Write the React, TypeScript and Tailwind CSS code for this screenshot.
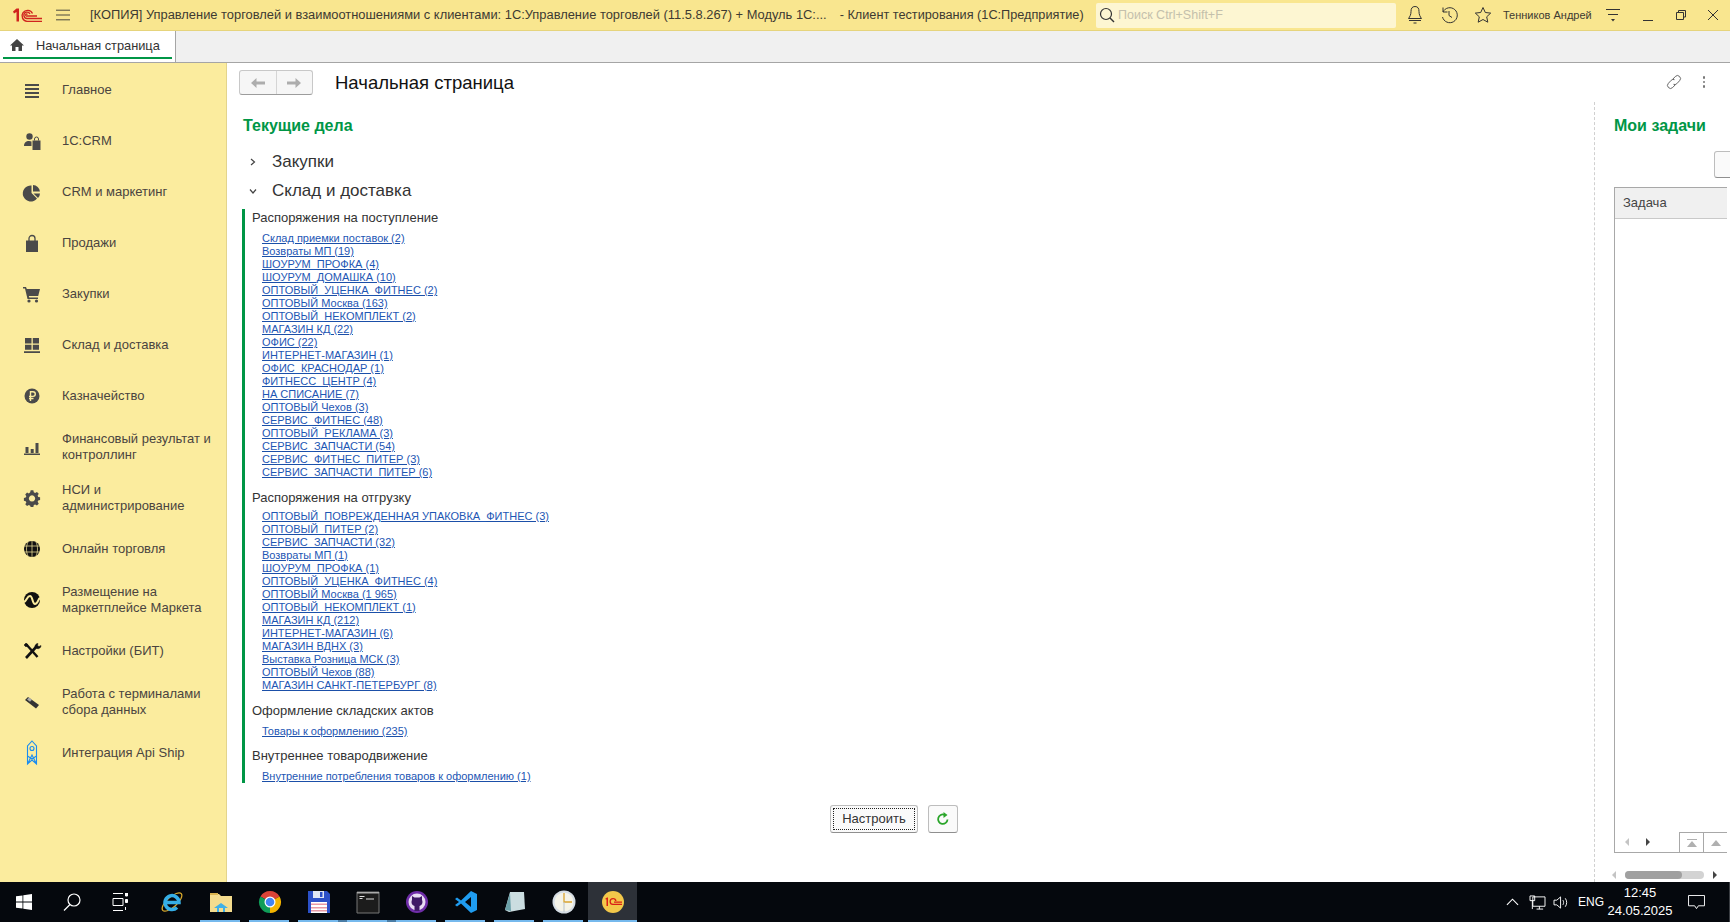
import type { ReactNode } from 'react';

const G = '#4a4a4a';

const sideItems: { label: ReactNode; icon: ReactNode }[] = [
  { label: 'Главное', icon: <path d="M2 3h14v2H2zM2 7h14v2H2zM2 11h14v2H2zM2 15h14v2H2z" fill={G} /> },
  { label: '1С:CRM', icon: <g fill={G}><circle cx="6.5" cy="4.5" r="3.2" /><path d="M1 14c0-3.5 2-5 5-5 1 0 2 .2 2.5.6V14z" /><path d="M9.5 8.5h8V18h-8z" /><path d="M11.5 8.5V7a2 2 0 0 1 4 0v1.5" fill="none" stroke={G} /></g> },
  { label: 'CRM и маркетинг', icon: <g fill={G}><path d="M8.5 2.5v7.5l5.5 5.5A8 8 0 1 1 8.500 2.500z" /><path d="M10 2a7 7 0 0 1 6.900 6.500H10z" /><path d="M10.500 10.500h6.500a7 7 0 0 1-2 4.500z" /></g> },
  { label: 'Продажи', icon: <g fill={G}><path d="M3 6.500h12V18H3z" /><path d="M6 9V4.500a3 3 0 0 1 6 0V9" fill="none" stroke={G} strokeWidth="1.300" /></g> },
  { label: 'Закупки', icon: <g fill={G}><path d="M0 2h3l.8 2H17l-1.800 7H5.800L6.300 12.500H15V14H4.500L2 3.500H0z" /><circle cx="6" cy="16" r="1.600" /><circle cx="13.500" cy="16" r="1.600" /></g> },
  { label: 'Склад и доставка', icon: <path d="M2 2h6.500v5.500H2zM9.800 2H16v5.500H9.800zM2 8.800h6.500v5H2zM9.800 8.800H16v5H9.800zM1 15.200h16V17H1z" fill={G} /> },
  { label: 'Казначейство', icon: <g><circle cx="9" cy="9" r="7.500" fill={G} /><path d="M7.500 14V4.800h2.500a2.300 2.300 0 0 1 0 4.600H6M6 11.500h4.500" stroke="#fbec9e" strokeWidth="1.400" fill="none" /></g> },
  { label: <>Финансовый результат и<br />контроллинг</>, icon: <path d="M2.500 9h3v6h-3zM7.700 11h3v4h-3zM12.500 5h3v10h-3zM1 15.500h16V17H1z" fill={G} /> },
  { label: <>НСИ и<br />администрирование</>, icon: <path fillRule="evenodd" d="M7.500 1.500h3l.5 2.200 1.500.7 2-1.200 2 2.100-1.200 2 .6 1.500 2.100.5v3l-2.100.5-.6 1.500 1.200 2-2 2-2-1.200-1.500.7-.5 2.100h-3L7 18.500l-1.500-.7-2 1.200-2-2 1.200-2-.7-1.500L0 13V10l2-.5.7-1.500-1.200-2 2-2.100 2 1.200L7 3.700z M9 7a3.500 3.500 0 1 0 .01 0z" fill={G} transform="scale(.9) translate(1 0)" /> },
  { label: 'Онлайн торговля', icon: <g><circle cx="9" cy="9" r="8" fill="#111" /><path d="M1 6h16M1 12h16M9 1v16M5 2c-2 4-2 10 0 14M13 2c2 4 2 10 0 14" stroke="#fbec9e" strokeWidth=".7" fill="none" /></g> },
  { label: <>Размещение на<br />маркетплейсе Маркета</>, icon: <g><circle cx="9" cy="9" r="8" fill="#111" /><path d="M1 11c3-1 3-6 6-6s2 8 5 8 3-5 5-6" stroke="#fbec9e" strokeWidth="2" fill="none" /></g> },
  { label: 'Настройки (БИТ)', icon: <g stroke="#111" fill="none"><path d="M3 16 14 4" strokeWidth="2.600" /><path d="M15 1.500a3.200 3.200 0 0 0-3 4l2 1a3 3 0 0 0 4-3l-2 1-1.500-1z" fill="#111" strokeWidth=".5" /><path d="M3 2l11.500 13" strokeWidth="2.400" /><path d="M1 3l2-2 2 2-2 2z" fill="#111" strokeWidth=".5" /></g> },
  { label: <>Работа с терминалами<br />сбора данных</>, icon: <g><path d="M2 7l3-3 11 8-3 3.500z" fill="#333" /><path d="M4 6.500l2-2 3 2.200-2 2z" fill="#a9a9a9" /></g> },
  { label: 'Интеграция Api Ship', icon: <g fill="none" stroke="#1a8cf0" strokeWidth="1.100"><path d="M9 -3 13.500 2v10l-4.500 3-4.500-3V2z" /><circle cx="9" cy="4.500" r="2" /><path d="M4.500 12v8l4.500-4 4.500 4v-8M4.500 20 9 11l4.500 9" /></g> },
];

const incoming = ['Склад приемки поставок (2)', 'Возвраты МП (19)', 'ШОУРУМ_ПРОФКА (4)', 'ШОУРУМ_ДОМАШКА (10)', 'ОПТОВЫЙ_УЦЕНКА_ФИТНЕС (2)', 'ОПТОВЫЙ Москва (163)', 'ОПТОВЫЙ_НЕКОМПЛЕКТ (2)', 'МАГАЗИН КД (22)', 'ОФИС (22)', 'ИНТЕРНЕТ-МАГАЗИН (1)', 'ОФИС_КРАСНОДАР (1)', 'ФИТНЕСС_ЦЕНТР (4)', 'НА СПИСАНИЕ (7)', 'ОПТОВЫЙ Чехов (3)', 'СЕРВИС_ФИТНЕС (48)', 'ОПТОВЫЙ_РЕКЛАМА (3)', 'СЕРВИС_ЗАПЧАСТИ (54)', 'СЕРВИС_ФИТНЕС_ПИТЕР (3)', 'СЕРВИС_ЗАПЧАСТИ_ПИТЕР (6)'];
const outgoing = ['ОПТОВЫЙ_ПОВРЕЖДЕННАЯ УПАКОВКА_ФИТНЕС (3)', 'ОПТОВЫЙ_ПИТЕР (2)', 'СЕРВИС_ЗАПЧАСТИ (32)', 'Возвраты МП (1)', 'ШОУРУМ_ПРОФКА (1)', 'ОПТОВЫЙ_УЦЕНКА_ФИТНЕС (4)', 'ОПТОВЫЙ Москва (1 965)', 'ОПТОВЫЙ_НЕКОМПЛЕКТ (1)', 'МАГАЗИН КД (212)', 'ИНТЕРНЕТ-МАГАЗИН (6)', 'МАГАЗИН ВДНХ (3)', 'Выставка Розница МСК (3)', 'ОПТОВЫЙ Чехов (88)', 'МАГАЗИН САНКТ-ПЕТЕРБУРГ (8)'];

const Group = ({ title, links, tight, className }: { title: string; links: string[]; tight?: boolean; className: string }) => (
  <div className={`pl-[7px] ${className}`}>
    <div className={`text-[13px] leading-[16px] text-[#333] ${tight ? 'mb-[4px]' : 'mb-[6px]'}`}>{title}</div>
    <div className="pl-[10px] flex flex-col items-start">
      {links.map((l) => (
        <a key={l} className="text-[11px] leading-[13px] h-[13px] text-[#1d56b4] underline decoration-[#1b4fa8] underline-offset-1 whitespace-nowrap">{l}</a>
      ))}
    </div>
  </div>
);

const Sidebar = () => (
  <aside className="w-[227px] shrink-0 bg-[#fbec9e] border-r border-[#e3d48c] pt-[1px]">
    {sideItems.map((it, i) => (
      <div key={i} className="h-[51px] flex items-center">
        <svg viewBox="0 0 18 18" className="w-[18px] h-[18px] ml-[23px] mr-[21px] shrink-0 overflow-visible">{it.icon}</svg>
        <span className="text-[13px] leading-[16px] text-[#4a4440]">{it.label}</span>
      </div>
    ))}
  </aside>
);

const TitleBar = () => (
  <header className="h-[31px] bg-[#f9e68f] border-b border-[#e6d47c] flex items-center">
    <svg viewBox="0 0 29 14" className="w-[29px] h-[14px] ml-[13px] shrink-0">
      <path d="M0 3.500 3.500.5H6v13H3.500V4L1 5.500z" fill="#d0241e" />
      <g stroke="#d0241e" strokeWidth="1.300" fill="none">
        <path d="M19.500 5.500A5.500 5.500 0 1 0 14 13.300H29" />
        <path d="M17 6A3.200 3.200 0 1 0 14 10.500H29" />
        <path d="M14.500 6.500A1 1 0 1 0 14 8H24" />
      </g>
    </svg>
    <svg viewBox="0 0 16 12" className="w-[14px] h-[12px] ml-[14px] shrink-0"><path d="M0 .5h16M0 6h16M0 11.500h16" stroke="#333" /></svg>
    <span className="ml-[20px] text-[12.880px] text-[#3d3a32] whitespace-nowrap w-[997px] shrink-0">[КОПИЯ] Управление торговлей и взаимоотношениями с клиентами: 1С:Управление торговлей (11.5.8.267) + Модуль 1С:...<span className="ml-[13px] text-[12.710px]">- Клиент тестирования (1С:Предприятие)</span></span>
    <div className="ml-[9px] w-[300px] h-[25px] bg-[#fdf6d2] rounded-[2px] flex items-center shrink-0">
      <svg viewBox="0 0 16 16" className="w-[16px] h-[16px] ml-[3px]"><circle cx="7" cy="7" r="5.500" stroke="#333" strokeWidth="1.200" fill="none" /><path d="M11 11l4 4" stroke="#333" strokeWidth="1.500" /></svg>
      <span className="ml-[3px] text-[12.500px] text-[#c4c0ac]">Поиск Ctrl+Shift+F</span>
    </div>
    <svg viewBox="0 0 18 20" className="w-[18px] h-[20px] ml-[10px]"><path d="M9 1.500c-3 0-4 2-4 5 0 3-1 5-2.500 7h13c-1.500-2-2.500-4-2.500-7 0-3-1-5-4-5zM3 15.500h12M7.500 18h3" stroke="#333" fill="none" /></svg>
    <svg viewBox="0 0 18 18" className="w-[18px] h-[18px] ml-[16px]"><path d="M3 6a7.500 7.500 0 1 1-.5 5M3 1.500V6h4.500M9 5v4.500l3 2" stroke="#333" fill="none" /></svg>
    <svg viewBox="0 0 18 18" className="w-[18px] h-[18px] ml-[16px]"><path d="M9 1.500l2.300 5 5.400.6-4 3.700 1.100 5.400L9 13.500l-4.800 2.700 1.100-5.400-4-3.700 5.400-.6z" stroke="#333" fill="none" /></svg>
    <span className="ml-[11px] text-[11px] text-[#3d3a32] whitespace-nowrap">Тенников Андрей</span>
    <svg viewBox="0 0 16 16" className="w-[16px] h-[16px] ml-[13px]"><path d="M1 2.500h14M3 7.500h10" stroke="#333" /><path d="M6 12h4l-2 2.500z" fill="#333" /></svg>
    <span className="ml-[22px] w-[10px] h-px bg-[#333] mt-[10px]" />
    <svg viewBox="0 0 10 10" className="w-[10px] h-[10px] ml-[23px]"><path d="M2.500 2.500V.5h7v6.500h-2M.5 2.500h7v7h-7z" stroke="#333" fill="none" /></svg>
    <svg viewBox="0 0 10 10" className="w-[10px] h-[10px] ml-[22px]"><path d="M0 0l10 10M10 0 0 10" stroke="#333" /></svg>
  </header>
);

const TabBar = () => (
  <div className="h-[32px] bg-[#f0f0f0] border-b border-[#a5a5a5] flex">
    <div className="w-[176px] bg-white border-r border-[#a5a5a5] px-[3px] pt-[7px]">
      <div className="h-[21px] border-b-2 border-[#009646] flex items-start pl-[7px]">
        <svg viewBox="0 0 14 12" className="w-[14px] h-[12px] mt-[1px]"><path d="M7 0 14 6.500h-2V12H8.500V8h-3v4H2V6.500H0z" fill="#444" /></svg>
        <span className="ml-[12px] text-[12.800px] leading-[16px] text-[#333] whitespace-nowrap">Начальная страница</span>
      </div>
    </div>
  </div>
);

const NavButtons = () => (
  <div className="w-[74px] h-[25px] border border-[#c8c8c8] border-b-[#9c9c9c] rounded-[3px] bg-[#f6f6f6] flex shrink-0">
    <div className="flex-1 flex items-center justify-center border-r border-[#d5d5d5]">
      <svg viewBox="0 0 14 10" className="w-[14px] h-[10px]"><path d="M5.500 0 0 5l5.500 5V6.500H14v-3H5.500z" fill="#adadad" /></svg>
    </div>
    <div className="flex-1 flex items-center justify-center">
      <svg viewBox="0 0 14 10" className="w-[14px] h-[10px]"><path d="M8.500 0 14 5l-5.500 5V6.500H0v-3h8.500z" fill="#adadad" /></svg>
    </div>
  </div>
);

const RightPanel = () => (
  <div className="w-[136px] shrink-0 border-l border-dashed border-[#d0d0d0] pl-[19px] pt-[14px] pb-[29px] flex flex-col">
    <h3 className="text-[16px] leading-[20px] font-bold text-[#009646] whitespace-nowrap">Мои задачи</h3>
    <div className="flex-none h-[27px] w-[20px] mt-[15px] ml-[100px] border border-[#bdbdbd] border-b-[#8f8f8f] rounded-l-[3px] bg-[#fafafa]" />
    <div className="mt-[9px] flex-1 w-[113px] border border-[#a8a8a8] border-r-0 flex flex-col">
      <div className="h-[31px] bg-[#f0f0f0] border-b border-[#c9c9c9] flex items-center pl-[8px] text-[13px] text-[#444]">Задача</div>
      <div className="flex-1" />
      <div className="h-[20px] flex items-center">
        <span className="w-0 h-0 ml-[10px] border-y-[4px] border-y-transparent border-r-[4px] border-r-[#c4c4c4]" />
        <span className="w-0 h-0 ml-[17px] border-y-[4px] border-y-transparent border-l-[4px] border-l-[#444]" />
        <div className="ml-auto flex h-full">
          <div className="w-[24px] border border-b-0 border-r-0 border-[#a8a8a8] flex flex-col items-center justify-center">
            <span className="w-[10px] h-px bg-[#b0b0b0] mb-px" />
            <span className="w-0 h-0 border-x-[5px] border-x-transparent border-b-[6px] border-b-[#b0b0b0]" />
          </div>
          <div className="w-[24px] border border-b-0 border-r-0 border-[#a8a8a8] flex items-center justify-center">
            <span className="w-0 h-0 border-x-[5px] border-x-transparent border-b-[6px] border-b-[#b0b0b0]" />
          </div>
        </div>
      </div>
    </div>
  </div>
);

const Content = () => (
  <main className="flex-1 min-w-0 bg-white flex flex-col relative">
    <div className="h-[39px] shrink-0 flex items-center pl-[12px]">
      <NavButtons />
      <h1 className="ml-[22px] mt-[1px] text-[18.500px] text-[#111]">Начальная страница</h1>
      <svg viewBox="0 0 16 16" className="absolute right-[48px] top-[11px] w-[16px] h-[16px]">
        <path d="M6.500 5.500 9.300 2.500a3 3 0 0 1 4.300 4.200L10.800 9.700a3 3 0 0 1-3.300.6" stroke="#666" fill="none" />
        <path d="M9.500 10.500 6.700 13.500a3 3 0 0 1-4.300-4.200L5.200 6.300a3 3 0 0 1 3.300-.6" stroke="#666" fill="none" />
      </svg>
      <span className="absolute right-[25px] top-[13px] flex flex-col gap-[2px]">
        <span className="w-[2.500px] h-[2.500px] rounded-full bg-[#777]" /><span className="w-[2.500px] h-[2.500px] rounded-full bg-[#777]" /><span className="w-[2.500px] h-[2.500px] rounded-full bg-[#777]" />
      </span>
    </div>
    <div className="flex-1 flex min-h-0">
      <section className="flex-1 min-w-0 pl-[16px] pt-[14px]">
        <h2 className="text-[16px] leading-[20px] font-bold text-[#009646]">Текущие дела</h2>
        <div className="mt-[12px] flex items-center h-[28px] text-[#333]">
          <svg viewBox="0 0 8 8" className="w-[8px] h-[8px] ml-[6px]"><path d="M2 1l3.500 3L2 7" stroke="#444" fill="none" strokeWidth="1.200" /></svg>
          <span className="ml-[15px] text-[17px]">Закупки</span>
        </div>
        <div className="flex items-center h-[29px] text-[#333]">
          <svg viewBox="0 0 8 8" className="w-[8px] h-[8px] ml-[6px]"><path d="M1 2.500 4 6l3-3.500" stroke="#444" fill="none" strokeWidth="1.200" /></svg>
          <span className="ml-[15px] text-[17px]">Склад и доставка</span>
        </div>
        <div className="mt-[4px] -ml-[1px] border-l-[3px] border-[#009646] pt-px w-fit pr-[10px]">
          <Group title="Распоряжения на поступление" links={incoming} className="mb-[11px]" />
          <Group title="Распоряжения на отгрузку" links={outgoing} tight className="mb-[11px]" />
          <Group title="Оформление складских актов" links={['Товары к оформлению (235)']} className="mb-[10px]" />
          <Group title="Внутреннее товародвижение" links={['Внутренние потребления товаров к оформлению (1)']} className="mb-0" />
        </div>
        <div className="mt-[22px] ml-[587px] flex gap-[10px]">
          <div className="w-[88px] h-[28px] border border-[#bdbdbd] border-b-[#8f8f8f] rounded-[3px] bg-[#fafafa] p-[2px]">
            <div className="h-full border border-dotted border-[#222] flex items-center justify-center text-[13px] text-[#333]">Настроить</div>
          </div>
          <div className="w-[30px] h-[28px] border border-[#bdbdbd] border-b-[#8f8f8f] rounded-[3px] bg-[#fafafa] flex items-center justify-center">
            <svg viewBox="0 0 14 14" className="w-[14px] h-[14px]"><path d="M11.500 7.500A4.700 4.700 0 1 1 8.500 2.800" stroke="#2aa52a" strokeWidth="1.800" fill="none" /><path d="M7.500 0l4 3-4 3z" fill="#2aa52a" /></svg>
          </div>
        </div>
      </section>
      <RightPanel />
    </div>
    <div className="absolute left-[1385px] bottom-[3px] flex items-center h-[8px]">
      <span className="w-0 h-0 border-y-[4px] border-y-transparent border-r-[4px] border-r-[#c4c4c4]" />
      <div className="ml-[9px] w-[79px] h-[8px] rounded-full bg-[#d3d3d3]"><div className="w-[57px] h-full rounded-full bg-[#a0a0a0]" /></div>
      <span className="w-0 h-0 ml-[9px] border-y-[4px] border-y-transparent border-l-[4px] border-l-[#444]" />
    </div>
  </main>
);

const taskIcons: ReactNode[] = [
  <g key="ie"><ellipse cx="12" cy="12" rx="12.500" ry="5" transform="rotate(-42 12 12)" stroke="#d9a92c" strokeWidth="1.200" fill="none" /><path d="M5.500 12.500H19A7 7 0 1 0 17 17.500" stroke="#35aee6" strokeWidth="3.500" fill="none" /></g>,
  <g key="fold"><path d="M1 4h9l2 2h11v16H1z" fill="#f4dc8e" /><path d="M1 3h8v2H1z" fill="#d9b24e" /><path d="M5 18l7-5 7 5h-3v4H8v-4z" fill="#3fb0e8" /><path d="M10 18h4v4h-4z" fill="#f4dc8e" /></g>,
  <g key="chrome"><path d="M12 12 2.470 6.500A11 11 0 0 1 21.530 6.500z" fill="#db4437" /><path d="M12 12 21.530 6.500A11 11 0 0 1 12 23z" fill="#f4b400" /><path d="M12 12V23A11 11 0 0 1 2.470 6.500z" fill="#0f9d58" /><circle cx="12" cy="12" r="5.500" fill="#fff" /><circle cx="12" cy="12" r="4.300" fill="#4285f4" /></g>,
  <g key="floppy"><path d="M1 1h19l3 3v19H1z" fill="#2b50c8" /><path d="M6 1h11v7H6z" fill="#dfe6f5" /><path d="M13 2h2.500v5H13z" fill="#2b50c8" /><path d="M4 12h16v11H4z" fill="#fff" /><path d="M4 13.500h16v1.500H4zM4 17h16v1.500H4zM4 20h16v1.500H4z" fill="#e89aa5" /></g>,
  <g key="cmd"><path d="M1 2h22v21H1z" fill="#1c1c1c" stroke="#777" /><path d="M1 2h22v1.500H1z" fill="#aaa" /><path d="M3.500 6h5v1h-5zM3.500 8h3v1h-3zM10 8.500h8v1h-8z" fill="#ddd" /></g>,
  <g key="gh"><circle cx="12" cy="12" r="11" fill="#6f2da8" /><circle cx="12" cy="12" r="8.500" fill="#e8ddf2" /><path d="M7 6l2.500 1.500h5L17 6v4c1 2 .5 5-2.500 6v5h-5v-5C6.500 15 6 12 7 10z" fill="#3f1a66" /></g>,
  <g key="vs"><path d="M17 1 23 4v16l-6 3L7 13.500l-4 3L1 15l4-3-4-3 2-1.500 4 3z" fill="#1f9cf0" /><path d="M17 7l-6 5 6 5z" fill="#05080d" /></g>,
  <g key="note"><path d="M7 2h14l1 17-16 3-4-2z" fill="#cbdde0" /><path d="M2 20 7 3l1 18z" fill="#6aa0a8" /></g>,
  <g key="clock"><circle cx="12" cy="12" r="11.500" fill="#d6dde4" /><circle cx="12" cy="12" r="9.500" fill="#f5f3e8" /><path d="M12 3v9h8" stroke="#d9a431" strokeWidth="1.300" fill="none" /><path d="M12 12v10" stroke="#b8c2ca" /></g>,
  <g key="1c"><circle cx="12" cy="12" r="11" fill="#f3c84a" /><path d="M4 9l2-1.500h1V16H5.500V9.500zM21 15H12a3.500 3.500 0 0 1 0-7c2 0 3.500 1 3.500 3h-1.500c0-1.200-.8-1.700-2-1.700a2.200 2.200 0 0 0 0 4.400h9zM21 12.800h-8v-1.300h8z" fill="#d81f16" /></g>,
];

const Taskbar = () => (
  <footer className="h-[40px] bg-[#05080d] flex items-stretch text-white relative">
    <div className="w-[48px] flex items-center justify-center">
      <svg viewBox="0 0 16 16" className="w-[16px] h-[16px]"><path d="M0 2.300 6.500 1.400v6.200H0zM7.300 1.300 16 0v7.600H7.300zM0 8.400h6.500v6.200L0 13.700zM7.300 8.400H16V16l-8.700-1.200z" fill="#fff" /></svg>
    </div>
    <div className="w-[48px] flex items-center justify-center">
      <svg viewBox="0 0 18 18" className="w-[18px] h-[18px]"><circle cx="11" cy="7" r="6" stroke="#fff" fill="none" strokeWidth="1.200" /><path d="M7 11.500 1 17.500" stroke="#fff" strokeWidth="1.300" /></svg>
    </div>
    <div className="w-[48px] flex items-center justify-center">
      <svg viewBox="0 0 16 18" className="w-[16px] h-[18px]"><path d="M1 .5h10M1 17.500h10" stroke="#fff" /><path d="M1 5.500h10v7H1z" stroke="#fff" fill="none" /><path d="M13.500 0v3h2V0zM13.500 6.500v3h2v-3zM13.500 14v3" stroke="#fff" fill="#fff" /></svg>
    </div>
    <div className="flex ml-[3px]">
      {taskIcons.map((icon, i) => (
        <div key={i} className={`w-[49px] flex items-center justify-center relative ${i === 9 ? 'bg-[#2d3138]' : ''}`}>
          <svg viewBox="0 0 24 24" className="w-[24px] h-[24px] overflow-visible">{icon}</svg>
          {i > 0 && i < 9 && <span className="absolute bottom-0 left-[4px] right-[5px] h-[2px] bg-[#76b9ed]" />}
          {(i === 3 || i === 4) && <span className="absolute bottom-0 right-[-4px] w-[9px] h-[2px] bg-[#4a7da6]" />}
          {i === 9 && <span className="absolute bottom-0 left-0 right-0 h-[2px] bg-[#76b9ed]" />}
        </div>
      ))}
    </div>
    <div className="ml-auto flex items-center pr-[10px] border-r border-[#3a3d42]">
      <svg viewBox="0 0 14 8" className="w-[13px] h-[8px]"><path d="M1 7l6-6 6 6" stroke="#fff" fill="none" strokeWidth="1.200" /></svg>
      <svg viewBox="0 0 18 16" className="w-[17px] h-[15px] ml-[10px]"><path d="M4 2h13v10H4zM8 15h7M11 12v3M1 1h5v5H1zM3.500 6v9" stroke="#fff" fill="none" /></svg>
      <svg viewBox="0 0 18 16" className="w-[17px] h-[15px] ml-[7px]"><path d="M1 5.500h3L8 2v12l-4-3.500H1zM10.500 5.500c1 1.500 1 3.500 0 5M13 3.500c2 2.500 2 6.500 0 9" stroke="#fff" fill="none" /></svg>
      <span className="ml-[8px] text-[12px]">ENG</span>
      <div className="ml-[2px] w-[68px] flex flex-col items-center text-[13px] leading-[18px]">
        <span>12:45</span><span>24.05.2025</span>
      </div>
      <svg viewBox="0 0 18 16" className="w-[17px] h-[15px] ml-[14px] mr-[14px]"><path d="M.5.500h17v11H11l-2 3-2-3H.5z" stroke="#fff" fill="none" /></svg>
    </div>
  </footer>
);

export default function App() {
  return (
    <div className="w-[1730px] h-[922px] flex flex-col overflow-hidden font-['Liberation_Sans',Arial,sans-serif]">
      <TitleBar />
      <TabBar />
      <div className="flex-1 min-h-0 flex">
        <Sidebar />
        <Content />
      </div>
      <Taskbar />
    </div>
  );
}
